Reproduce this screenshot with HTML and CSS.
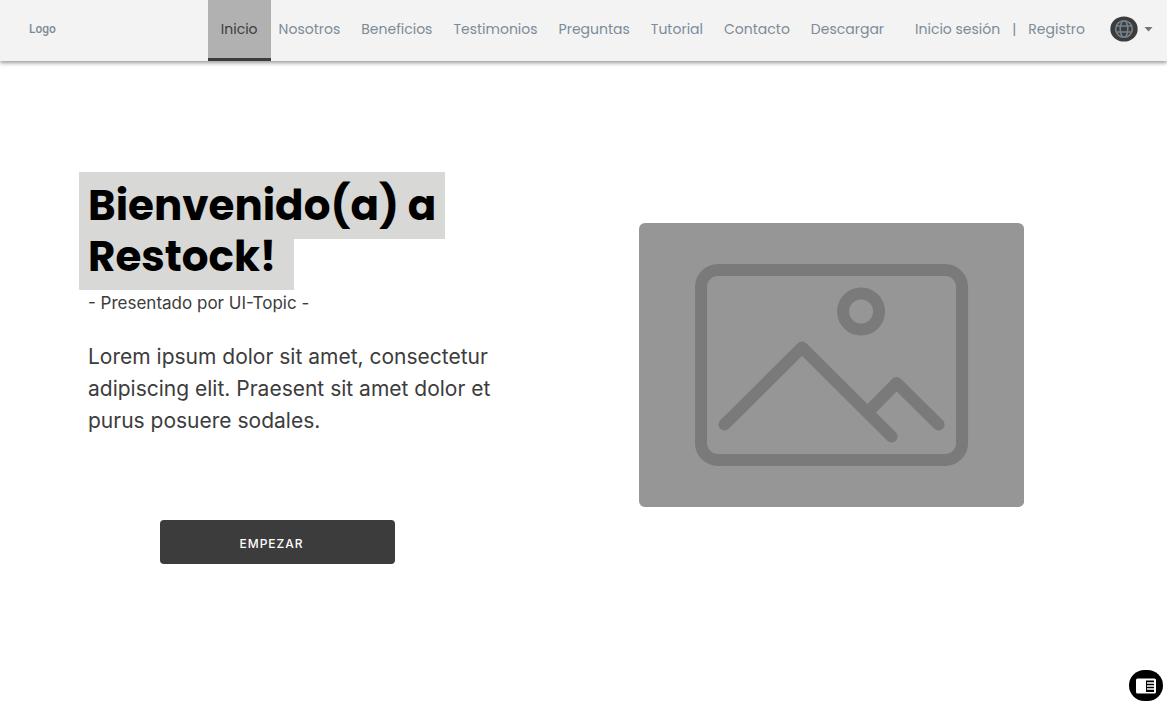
FILE: index.html
```html
<!DOCTYPE html>
<html lang="es">
<head>
<meta charset="utf-8">
<meta name="viewport" content="width=device-width, initial-scale=1">
<title>Restock</title>
<link rel="stylesheet" href="styles.css">
</head>
<body>
<header class="topbar">
  <a class="logo" href="#">Logo</a>
  <nav class="nav" aria-label="Principal">
    <a class="nav-link active" href="#" aria-current="page">Inicio</a>
    <a class="nav-link" href="#">Nosotros</a>
    <a class="nav-link" href="#">Beneficios</a>
    <a class="nav-link" href="#">Testimonios</a>
    <a class="nav-link" href="#">Preguntas</a>
    <a class="nav-link" href="#">Tutorial</a>
    <a class="nav-link" href="#">Contacto</a>
    <a class="nav-link" href="#">Descargar</a>
  </nav>
  <div class="account">
    <a class="account-link" href="#">Inicio sesión</a>
    <span>|</span>
    <a class="account-link" href="#">Registro</a>
  </div>
  <button class="language" type="button" aria-label="Idioma">
    <svg class="globe" viewBox="0 0 28 26" aria-hidden="true">
      <ellipse cx="14" cy="13" rx="13.7" ry="12.6" fill="#3c3c3c"/>
      <g fill="none" stroke="#74838f" stroke-width="1.6">
        <circle cx="14" cy="13" r="8.3"/>
        <ellipse cx="14" cy="13" rx="3.8" ry="8.3"/>
        <path d="M6.4 10h15.200M6.400 16h15.200"/>
      </g>
    </svg>
    <svg class="caret" viewBox="0 0 8 5" aria-hidden="true"><path d="M0 0h8L4 4.500z" fill="#757575"/></svg>
  </button>
</header>
<main class="hero">
  <section class="intro">
    <h1 class="title"><span class="title-mark">Bienvenido(a) a<br>Restock!&nbsp;</span></h1>
    <p class="byline">- Presentado por UI-Topic -</p>
    <p class="lead">Lorem ipsum dolor sit amet, consectetur adipiscing elit. Praesent sit amet dolor et purus posuere sodales.</p>
    <button class="start" type="button">EMPEZAR</button>
  </section>
  <svg class="picture" viewBox="0 0 385 284" role="img" aria-label="Imagen">
    <rect width="385" height="284" rx="6" fill="#969696"/>
    <g fill="none" stroke="#7a7a7a" stroke-width="12" stroke-linecap="round" stroke-linejoin="round">
      <rect x="62" y="47" width="261" height="190" rx="17"/>
      <circle cx="222" cy="88.500" r="18"/>
      <path d="M85.500 201.500L163 124.500L252.500 213.500M229 189L257.500 160L299.500 201.500"/>
    </g>
  </svg>
</main>
<button class="reader" type="button" aria-label="Vista de lectura">
  <svg class="reader-icon" viewBox="0 0 34 31" aria-hidden="true">
    <rect width="34" height="31" rx="15.500" fill="#000"/>
    <rect x="7" y="8.500" width="20" height="15" rx="1.500" fill="#fff"/>
    <path d="M17 10.500h8v11.500h-8z" fill="#000"/>
    <path d="M18 13h7M18 16h7M18 19h7" stroke="#fff" stroke-width="1.300"/>
  </svg>
</button>
</body>
</html>
```
FILE: styles.css
```css
* { box-sizing: border-box; }

body {
  margin: 0;
  background: #fff;
  color: #3c3c3c;
  font-family: Inter, "Open Sans", sans-serif;
}

a { color: inherit; text-decoration: none; }

button { border: 0; cursor: pointer; font-family: inherit; }

.topbar {
  display: flex;
  align-items: center;
  height: 61px;
  padding: 0 14px 0 29px;
  background: #f3f3f3;
  box-shadow: 0 2px 4px rgba(0, 0, 0, 0.4);
  color: #7c8b98;
  font-family: Poppins, Inter, sans-serif;
  font-size: 14px;
  white-space: nowrap;
}

.logo {
  padding-bottom: 3px;
  font-family: Roboto, Inter, sans-serif;
  font-size: 12px;
  font-weight: 500;
}

.nav {
  display: flex;
  align-self: stretch;
  gap: 8px;
  margin-left: auto;
}

.nav-link {
  display: flex;
  align-items: center;
  padding: 0 13px 3px 0;
}

.active {
  padding: 3px 13px 3px;
  border-bottom: 3px solid #3c3c3c;
  background: #b1b1b1;
  color: #3c3c3c;
}

.account {
  display: flex;
  gap: 12px;
  margin-left: 18px;
  padding-bottom: 3px;
}

.language {
  display: flex;
  align-items: center;
  gap: 6px;
  margin: 0 0 3px 25px;
  padding: 0;
  background: none;
}

.globe { width: 28px; height: 26px; }
.caret { width: 9px; height: 5px; }

.hero {
  display: grid;
  grid-template-columns: 48vw 33vw;
  align-items: start;
  padding: 119px 0 60px 79px;
}

.title {
  margin: 0;
  color: #000;
  font-family: Poppins, Inter, sans-serif;
  font-size: 42px;
  font-weight: 700;
  line-height: 51px;
}

.title-mark {
  padding: 4px 9px;
  background: #d8d8d6;
  -webkit-box-decoration-break: clone;
  box-decoration-break: clone;
}

.byline {
  margin: 8px 9px 0;
  font-size: 17px;
  line-height: 26px;
}

.lead {
  max-width: 420px;
  margin: 25px 9px 0;
  font-size: 21px;
  line-height: 32px;
}

.start {
  display: block;
  width: 235px;
  height: 44px;
  margin: 83px 0 0 81px;
  padding: 2px 12px 0 0;
  border-radius: 4px;
  background: #3c3c3c;
  color: #fff;
  font-size: 12px;
  font-weight: 500;
  letter-spacing: 1px;
}

.picture {
  width: 100%;
  margin-top: 43px;
}

.reader {
  position: fixed;
  right: 4px;
  bottom: 9px;
  padding: 0;
  background: none;
}

.reader-icon { display: block; width: 34px; height: 31px; }
```
